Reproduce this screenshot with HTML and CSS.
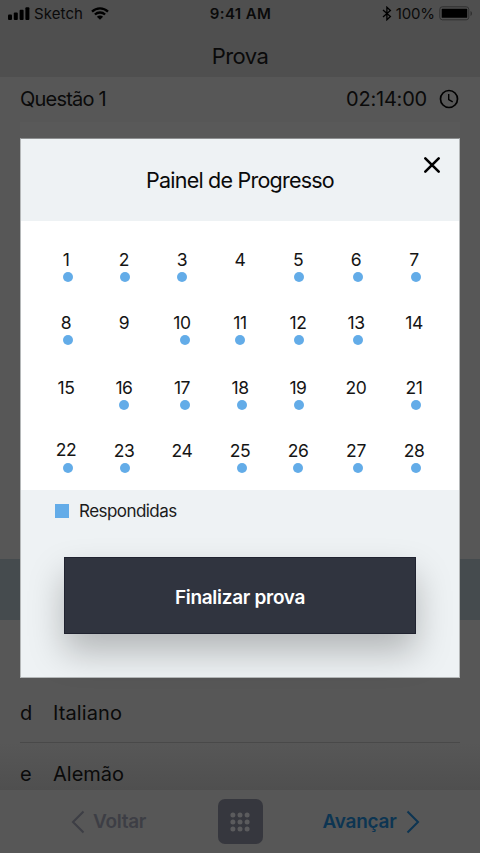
FILE: index.html
```html
<!DOCTYPE html>
<html lang="pt-BR">
<head>
<meta charset="utf-8">
<title>Prova</title>
<link rel="stylesheet" href="styles.css">
</head>
<body>
<div class="screen">
  <header class="topbar">
    <div class="status">
      <div class="status-side">
        <svg class="signal" width="22" height="13" viewBox="0 0 22 13"><rect x="0" y="7.6" width="4" height="5.4" rx="1"/><rect x="5.8" y="5.4" width="4" height="7.6" rx="1"/><rect x="11.6" y="2.8" width="4" height="10.2" rx="1"/><rect x="17.4" y="0.2" width="4" height="12.8" rx="1"/></svg>
        <span class="carrier">Sketch</span>
        <svg class="wifi" width="18" height="13" viewBox="0 0 18 13"><path d="M1 4.600C5.500.3 12.500.3 17 4.600M3.900 7.500c2.900-2.700 7.300-2.700 10.200 0" fill="none" stroke="#000" stroke-width="2.300"/><path d="M5.900 9.700c1.800-1.600 4.400-1.600 6.200 0L9 12.800z"/></svg>
      </div>
      <span class="time">9:41 AM</span>
      <div class="status-side right">
        <svg class="bluetooth" width="10" height="15" viewBox="0 0 10 15"><path d="M1 4l7.400 6.600L4.900 13.800V1.200L8.400 4.400 1 11" fill="none" stroke="#000" stroke-width="1.300"/></svg>
        <span class="percent">100%</span>
        <svg class="battery" width="34" height="15" viewBox="0 0 34 15"><rect x=".8" y=".8" width="29" height="13" rx="2.600" fill="none" stroke="#303030"/><rect x="2.700" y="2.800" width="25.500" height="9" rx=".6"/><path d="M31.500 5v5c2-.8 2-4.200 0-5z" fill="#303030"/></svg>
      </div>
    </div>
    <h1 class="title">Prova</h1>
  </header>
  <div class="question-row">
    <span class="question">Questão 1</span>
    <span class="timer">02:14:00</span>
    <svg class="clock" width="20" height="20" viewBox="0 0 20 20" fill="none" stroke="#000" stroke-width="1.700"><circle cx="10" cy="10" r="8.500"/><path d="M9.700 5v5.500l4 2.300" stroke-width="1.400"/></svg>
  </div>
  <main class="content">
    <div class="statement"></div>
    <div class="selected-option"></div>
    <div class="option option-d"><span class="letter">d</span><span class="italiano">Italiano</span></div>
    <div class="option option-e"><span class="letter">e</span><span>Alemão</span></div>
  </main>
  <nav class="bottombar">
    <div class="back"><svg width="14" height="24" viewBox="0 0 14 24"><path d="M12.500 1.500L2 12l10.500 10.500" fill="none" stroke="currentColor" stroke-width="2"/></svg><span>Voltar</span></div>
    <div class="grid-button"><svg width="20" height="20" viewBox="0 0 20 20"><g fill="#5b5b5d"><circle cx="2.900" cy="2.900" r="2.500"/><circle cx="10" cy="2.900" r="2.500"/><circle cx="17.100" cy="2.900" r="2.500"/><circle cx="2.900" cy="10" r="2.500"/><circle cx="10" cy="10" r="2.500"/><circle cx="17.100" cy="10" r="2.500"/><circle cx="2.900" cy="17.100" r="2.500"/><circle cx="10" cy="17.100" r="2.500"/><circle cx="17.100" cy="17.100" r="2.500"/></g></svg></div>
    <div class="next"><span>Avançar</span><svg width="14" height="24" viewBox="0 0 14 24"><path d="M1.500 1.500L12 12 1.500 22.500" fill="none" stroke="currentColor" stroke-width="2"/></svg></div>
  </nav>

  <section class="dialog">
    <div class="dialog-head">
      <h2 class="dialog-title">Painel de Progresso</h2>
      <svg class="close" width="18" height="18" viewBox="0 0 18 18"><path d="M2.300 2.300l13.400 13.400M15.700 2.300L2.300 15.700" stroke="#000" stroke-width="2.600" stroke-linecap="round"/></svg>
    </div>
    <div class="days">
      <div class="week">
        <div class="day done right-2">1</div><div class="day done right-1">2</div><div class="day done">3</div><div class="day">4</div><div class="day done right-1">5</div><div class="day done right-2">6</div><div class="day done right-2">7</div>
      </div>
      <div class="week">
        <div class="day done right-2">8</div><div class="day">9</div><div class="day done right-3">10</div><div class="day done">11</div><div class="day done right-1">12</div><div class="day done right-2">13</div><div class="day">14</div>
      </div>
      <div class="week">
        <div class="day">15</div><div class="day done">16</div><div class="day done right-3">17</div><div class="day done right-2">18</div><div class="day done right-1">19</div><div class="day">20</div><div class="day done right-2">21</div>
      </div>
      <div class="week">
        <div class="day done right-2 raised">22</div><div class="day done right-1">23</div><div class="day">24</div><div class="day done right-2">25</div><div class="day done">26</div><div class="day done right-2">27</div><div class="day done right-2">28</div>
      </div>
    </div>
    <div class="legend"><i class="swatch"></i><span>Respondidas</span></div>
    <button class="finish">Finalizar prova</button>
  </section>
</div>
</body>
</html>
```
FILE: styles.css
```css
* { box-sizing: border-box; }
body { margin: 0; background: #575757; font-family: Inter, "Liberation Sans", sans-serif; color: #0a0a0a; }
h1, h2 { margin: 0; font-weight: 400; }
svg { display: block; flex: none; }
span { white-space: nowrap; }
.screen { position: relative; width: 480px; height: 853px; overflow: hidden; display: flex; flex-direction: column; }

.topbar { height: 77px; background: #4f4f4f; }
.status { height: 27px; display: flex; align-items: center; padding: 0 7px 0 8px; }
.status-side { display: flex; align-items: center; flex: 1; }
.right { justify-content: flex-end; }
.carrier { font-size: 15px; margin-left: 4px; letter-spacing: .1px; }
.wifi { margin-left: 8px; }
.time { font-size: 15px; font-weight: 600; letter-spacing: .4px; }
.percent { font-size: 15px; margin: 0 4px 0 4px; letter-spacing: -.1px; }
.title { font-size: 22px; line-height: 28px; margin-top: 15px; text-align: center; letter-spacing: -.6px; }

.question-row { height: 45px; display: flex; align-items: center; padding: 0 21px 1px 20px; }
.question { flex: 1; font-size: 20px; letter-spacing: -.8px; }
.timer { font-size: 20px; letter-spacing: -.2px; }
.clock { margin-left: 12px; }

.content { height: 668px; }
.statement { height: 437px; margin: 0 20px; background: #595959; }
.selected-option { height: 61px; background: #454b4e; }
.option { display: flex; align-items: center; padding: 0 20px; font-size: 20px; }
.option-d { height: 123px; margin: 0 20px; padding: 64px 0 0; border-bottom: 1px solid #494949; }
.italiano { letter-spacing: .1px; }
.option-e { height: 47px; padding-top: 15px; background: linear-gradient(#575757, #4f4f4f); }
.letter { width: 33px; }

.bottombar { height: 63px; background: #575757; display: grid; grid-template-columns: 1fr 45px 1fr; align-items: center; font-size: 19px; font-weight: 600; }
.back { color: #3d3e45; display: flex; align-items: center; gap: 8px; padding-left: 71px; letter-spacing: -.3px; }
.next { color: #0d3552; display: flex; align-items: center; gap: 9px; padding-left: 60px; letter-spacing: -.25px; }
.grid-button { width: 45px; height: 45px; border-radius: 7px; background: #36373e; display: grid; place-items: center; }

.dialog { position: absolute; left: 20px; top: 138px; width: 440px; height: 540px; background: #eef2f4; border: 1px solid #b5b8b9; border-top-color: #8d8f90; }
.dialog-head { position: relative; height: 82px; display: grid; place-items: center; }
.dialog-title { font-size: 21.5px; letter-spacing: -.78px; line-height: 28px; }
.close { position: absolute; right: 18px; top: 17px; }
.days { height: 269px; background: #fff; padding: 27px 15px 0 16px; }
.week { display: grid; grid-template-columns: repeat(7, 58px); height: 63px; }
.week:nth-child(2) { height: 65px; }
.day { font-size: 17.500px; line-height: 24px; text-align: center; color: #151515; letter-spacing: -.4px; }
.done::after { content: ""; display: block; width: 10.400px; height: 10.400px; margin: 0 auto; border-radius: 50%; background: #63ace8; }
.right-1::after { transform: translateX(1px); }
.right-2::after { transform: translateX(2px); }
.right-3::after { transform: translateX(3px); }
.raised { line-height: 22px; }
.raised::after { margin-top: 2px; }
.legend { display: flex; align-items: center; height: 42px; padding-left: 34px; gap: 10px; font-size: 17px; color: #1b1b1b; letter-spacing: -.55px; }
.swatch { width: 14px; height: 14px; background: #63ace8; }
.finish { display: block; width: 352px; height: 77px; margin: 25px 0 0 43px; padding: 3px 0 0; border: 1px solid #202330; background: #30343f; color: #fff; font: 600 19px Inter, "Liberation Sans", sans-serif; letter-spacing: -.3px; box-shadow: 0 18px 35px rgba(0, 0, 0, .25); }
```
